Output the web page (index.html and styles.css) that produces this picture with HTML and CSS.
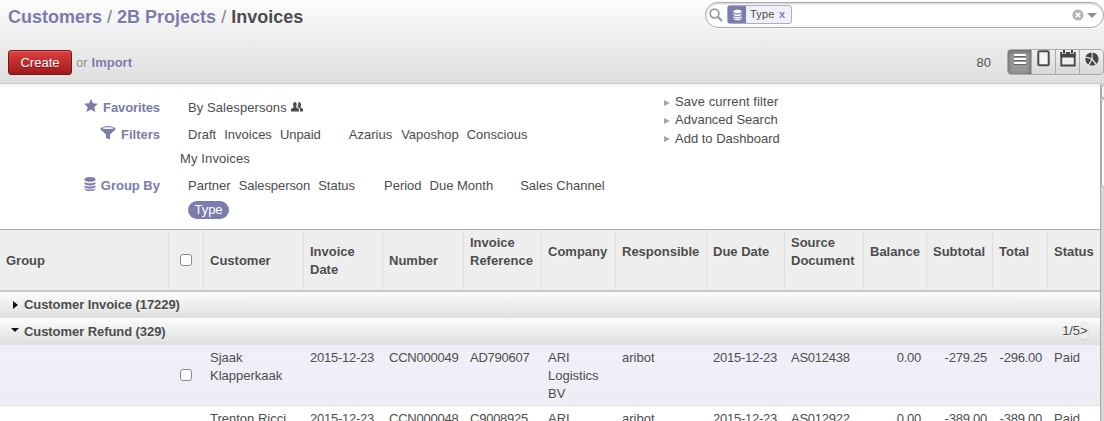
FILE: index.html
```html
<!DOCTYPE html>
<html lang="en">
<head>
<meta charset="utf-8">
<title>Invoices</title>
<link rel="stylesheet" href="styles.css">
</head>
<body>
<svg class="defs" width="0" height="0">
  <symbol id="db" viewBox="0 0 12 14"><path fill="currentColor" d="M.5 2.200C.5-.6 11.500-.6 11.500 2.200V3C11.500 5.400 .5 5.400 .5 3zM0.500 5C2 6.700 10 6.700 11.500 5V6.800C10 9.200 2 9.200 .5 6.800zM.5 8.300C2 10 10 10 11.500 8.300V10C10 12.200 2 12.200 .5 10zM.5 11.400C3 13 9 13 11.500 11.400V12.400C9 14.600 3 14.600 .5 12.400z"/></symbol>
</svg>
<header class="head">
  <div class="row top">
    <h1 class="crumbs"><a>Customers</a> <i>/</i> <a>2B Projects</a> <i>/</i> <b>Invoices</b></h1>
    <div class="search">
      <svg class="glass" viewBox="0 0 14 14"><circle cx="5.500" cy="5.500" r="4.400" fill="none" stroke="#9b9b9b" stroke-width="1.700"/><path d="M8.700 8.700L13 13" stroke="#9b9b9b" stroke-width="2.200"/></svg>
      <div class="facet"><span class="facet-icon"><svg width="9" height="12"><use href="#db"/></svg></span><span class="facet-text">Type</span><span class="x">x</span></div>
      <svg class="clear" viewBox="0 0 12 12"><circle cx="6" cy="6" r="5.600" fill="#b4b4b4"/><path d="M3.800 3.800L8.200 8.200M8.200 3.800L3.800 8.200" stroke="#fff" stroke-width="1.700"/></svg>
      <span class="down"></span>
    </div>
  </div>
  <div class="row actions">
    <button class="create">Create</button><span class="or">or</span><a class="import">Import</a>
    <span class="count">80</span>
    <div class="views">
      <span class="on"><svg width="14" height="12"><path d="M1 1.500h12M1 5.500h12M1 9.500h12" stroke="#666" stroke-width="1" transform="translate(0 1)"/><path d="M1 1h12M1 5h12M1 9h12" stroke="#fff" stroke-width="1.800"/></svg></span>
      <span><svg width="13" height="17"><rect x="1.300" y="1.300" width="10.400" height="14" rx="1" fill="#f4f4f4" stroke="#4c4c4c" stroke-width="2"/></svg></span>
      <span><svg width="16" height="17"><path d="M1.300 3h13.400v12.500H1.300z" fill="#eee" stroke="#444" stroke-width="1.800"/><path d="M.5 2.500h15V7.500H.5z" fill="#444"/><path d="M4 .5v3.500M12 .5v3.500" stroke="#eee" stroke-width="3.600"/><path d="M4 0v3.500M12 0v3.500" stroke="#444" stroke-width="2"/></svg></span>
      <span><svg width="14" height="17"><circle cx="7" cy="9" r="6.600" fill="#444"/><path d="M0 6.500L7 9L11.500 15M7 9L3.500 15.500M7 9V2" stroke="#eee" stroke-width="1.300" fill="none"/><path d="M0 2h6.300V6L0 6z" fill="#eee"/><path d="M.6 6.500C1.500 4.500 3 3 6.500 2.500V7.500z" fill="#444"/></svg></span>
    </div>
  </div>
</header>
<main class="main">
  <div class="content">
    <section class="drawer">
      <div class="filters">
        <div class="line fav"><span class="label"><svg width="14" height="13" viewBox="0 0 14 13"><path fill="currentColor" d="M7 0l2 4.200 5 .5-3.700 3.200L11.500 13 7 10.500 2.500 13l1.200-5.100L0 4.700l5-.5z"/></svg>Favorites</span><span class="sales">By Salespersons</span><svg class="people" width="12" height="10" viewBox="0 0 12 10"><path fill="#4c4c4c" d="M4 0c2 0 2.300 3.500.8 5L8 7v2.500H0V7l3-2C1.500 3.500 2 0 4 0zM7 .5c3-1.500 4 2.500 2.200 4.500L12 7v2.500H9V6.500L6.300 5C7.500 3.500 7.500 2 7 .5z"/></svg></div>
        <div class="line fil"><span class="label"><svg width="16" height="14" viewBox="0 0 16 14"><path fill="currentColor" d="M.5 2Q8-1.800 15.500 2V3.500L10 8.500V13.500L6 12V8.500L.5 3.500z"/><ellipse cx="8" cy="2.100" rx="5.500" ry=".9" fill="#fff"/></svg>Filters</span><span>Draft</span><span>Invoices</span><span class="unpaid">Unpaid</span><span class="set">Azarius</span><span class="vapo">Vaposhop</span><span>Conscious</span></div>
        <div class="line mine"><span class="my">My Invoices</span></div>
        <div class="line grp"><span class="label"><svg width="12" height="14"><use href="#db"/></svg>Group By</span><span>Partner</span><span class="person">Salesperson</span><span>Status</span><span class="set period">Period</span><span>Due Month</span><span class="set channel">Sales Channel</span></div>
        <div class="line typ"><span class="pill">Type</span></div>
      </div>
      <ul class="links"><li>Save current filter</li><li>Advanced Search</li><li>Add to Dashboard</li></ul>
    </section>
    <section class="table">
      <div class="cols th"><div>Group</div><div class="all"><input type="checkbox"></div><div>Customer</div><div>Invoice<br>Date</div><div>Number</div><div class="up">Invoice<br>Reference</div><div class="up">Company</div><div class="up">Responsible</div><div class="up">Due Date</div><div class="up">Source<br>Document</div><div class="up">Balance</div><div class="up">Subtotal</div><div class="up">Total</div><div class="up">Status</div></div>
      <div class="group g1"><i class="closed"></i>Customer Invoice (17229)</div>
      <div class="group g2"><i class="opened"></i>Customer Refund (329)<span class="pager">1/5<em>&gt;</em></span></div>
      <div class="cols tr odd"><div></div><div class="mid"><input type="checkbox"></div><div>Sjaak<br>Klapperkaak</div><div class="n">2015-12-23</div><div class="n">CCN000049</div><div class="n">AD790607</div><div>ARI<br>Logistics<br>BV</div><div>aribot</div><div class="n">2015-12-23</div><div class="n">AS012438</div><div class="n r">0.00</div><div class="n r">-279.25</div><div class="n r">-296.00</div><div>Paid</div></div>
      <div class="cols tr"><div></div><div class="mid"><input type="checkbox"></div><div>Trenton Ricci</div><div class="n">2015-12-23</div><div class="n">CCN000048</div><div class="n">C9008925</div><div>ARI<br>Logistics<br>BV</div><div>aribot</div><div class="n">2015-12-23</div><div class="n">AS012922</div><div class="n r">0.00</div><div class="n r">-389.00</div><div class="n r">-389.00</div><div>Paid</div></div>
    </section>
  </div>
  <div class="scroll"><div class="cap"></div><div class="thumb"></div></div>
</main>
</body>
</html>
```
FILE: styles.css
```css
* { box-sizing: border-box; }
body { margin: 0; width: 1104px; height: 421px; overflow: hidden; background: #fff; color: #4c4c4c; font: 13px/18px "Liberation Sans", Arial, sans-serif; text-shadow: 0 1px 1px rgba(255,255,255,.5); }
.defs { display: block; }
.head { height: 84px; background: linear-gradient(#fcfcfc, #dedede); border-bottom: 1px solid #cacaca; overflow: hidden; }
.row { display: flex; }
.top { height: 49px; padding-left: 8px; justify-content: space-between; }
.crumbs { margin: 6px 0 0; font-size: 18px; line-height: 22px; font-weight: bold; white-space: nowrap; }
.crumbs a, .import { color: #7c7bad; }
.crumbs i { font-style: normal; font-weight: normal; color: #808080; }
.search { display: flex; align-items: flex-start; width: 399px; height: 26px; margin-top: 2px; border: 1px solid #ababab; border-radius: 13px; background: #fff; box-shadow: inset 0 1px 2px rgba(0,0,0,.2), 0 1px 0 rgba(255,255,255,.6); }
.glass { width: 14px; height: 14px; margin: 5px 4px 0 3px; }
.facet { display: flex; width: 65px; height: 19px; margin-top: 2px; border: 1px solid #afafb6; border-radius: 3px; background: #f0f0fa; font-size: 11px; line-height: 17px; }
.facet-icon { width: 18px; background: #7c7bad; display: flex; align-items: center; justify-content: center; color: #fff; }
.facet-text { margin-left: 4px; width: 29px; letter-spacing: .2px; }
.x { color: #7c7bad; font-weight: bold; font-size: 11px; }
.clear { width: 12px; height: 12px; margin: 6px 3px 0 auto; }
.down { border: 5px solid transparent; border-top-color: #909090; border-bottom: 0; margin: 10px 6px 0 0; }
.actions { height: 34px; padding-left: 8px; }
.create { width: 64px; height: 25px; margin: 1px 0 0; padding: 0; border: 1px solid #73191a; border-radius: 3px; color: #fff; font: 13px "Liberation Sans", sans-serif; background: linear-gradient(#df3f3f, #a21a1a); box-shadow: inset 0 1px 1px rgba(255,255,255,.2); text-shadow: 0 1px 1px rgba(0,0,0,.3); }
.or, .import, .count { padding-top: 5px; }
.or { margin-left: 4px; color: #8c8c8c; }
.import { margin-left: 4px; font-weight: bold; }
.count { margin-left: auto; }
.views { display: flex; width: 97px; height: 26px; margin-left: 16px; border: 1px solid #ababab; border-radius: 4px; background: linear-gradient(#efefef, #d8d8d8); overflow: hidden; }
.views span { width: 24px; flex: none; border-right: 1px solid #ababab; display: flex; justify-content: center; }
.views .on { background: #999; box-shadow: inset 0 1px 5px rgba(0,0,0,.4); padding-top: 4px; }
.views span:last-child { border: 0; }
.main { display: flex; height: 337px; }
.content { width: 1100px; flex: none; overflow: hidden; background: #fff; }
.drawer { display: flex; height: 145px; background: linear-gradient(#f3f3f3, #fff 5px); }
.filters { width: 664px; padding-top: 15px; }
.line { display: flex; height: 18px; white-space: nowrap; }
.line > span + span { margin-left: 8px; }
.line > .label { width: 160px; margin-right: 20px; display: flex; justify-content: flex-end; font-weight: bold; color: #7c7bad; }
.label svg { margin: 0 5px 0 0; }
.line > .set { margin-left: 28px; }
.line .sales { letter-spacing: .08px; }
.line .unpaid { margin-left: 8px; letter-spacing: -.05px; }
.line .vapo { margin-left: 9px; }
.line .person { margin-left: 8px; letter-spacing: -.07px; }
.line > .period { margin-left: 29px; }
.line > .channel { margin-left: 27px; }
.my { letter-spacing: .12px; }
.people { margin: 3px 0 0 4px; }
.fil { margin-top: 9px; }
.fav .label svg { margin: 0 5px 0 0; }
.fav .label { letter-spacing: -.1px; }
.mine { margin-top: 6px; padding-left: 180px; }
.grp { margin-top: 9px; }
.typ { margin-top: 6px; padding-left: 188px; }
.pill { width: 41px; height: 18px; border-radius: 9px; background: #7c7bad; color: #fff; text-align: center; text-shadow: none; }
.links { margin: 9px 0 0; padding: 0; list-style: none; line-height: 18.3px; }
.links li { display: flex; align-items: center; }
.links li:first-child { letter-spacing: .08px; }
.links li::before { content: ""; border: 3.5px solid transparent; border-left: 6px solid #a5a5a9; border-right: 0; margin: 1px 5px 0 0; }
.cols { display: grid; grid-template-columns: 169px 35px 100px 79px 81px 78px 74px 91px 78px 79px 63px 66px 55px 52px; }
.cols > div { padding-left: 6px; white-space: nowrap; }
.th { height: 63px; border-top: 1px solid #afafb6; border-bottom: 2px solid #cacaca; background: #eee; font-weight: bold; }
.th > div { display: flex; align-items: center; border-right: 1px solid #dfdfdf; padding-top: 1px; }
.th > .all { padding: 0 0 1px 6px; }
.th > .up { padding-bottom: 17px; }
.th > div:last-child { border: 0; }
input { appearance: none; width: 12px; height: 12px; margin: 0 0 0 5px; border: 1px solid #8d8982; border-radius: 3px; background: #fff; }
.group { display: flex; align-items: center; background: linear-gradient(#fcfcfc, #dedede); font-weight: bold; letter-spacing: -.07px; }
.g1 { height: 26px; }
.g2 { height: 27px; }
.group i { width: 8px; margin: 0 4px 0 12px; }
.closed::before, .opened::before { content: ""; display: block; width: 0; border: 4px solid transparent; }
.closed::before { border-left: 5px solid #111; border-right: 0; margin-left: 1px; }
.opened::before { border-top: 4px solid #111; border-bottom: 0; margin: -4px 0 0 -1px; }
.pager { margin: -1px 12px 0 auto; font-weight: normal; display: flex; }
.pager em { font-style: normal; width: 8px; height: 17px; border-radius: 3px; background: #eee; box-shadow: 0 1px 2px rgba(0,0,0,.12); }
.tr { height: 61px; padding-top: 4px; border-bottom: 1px solid #dfdfdf; }
.odd { background: linear-gradient(#f0f0fa, #ededf6); }
.n { letter-spacing: -.24px; }
.cols > .r { text-align: right; padding: 0 6px 0 0; }
.mid { padding-top: 19px; }
.scroll { width: 4px; border-left: 1px solid #a9a6a2; background: #d9d6d2; overflow: hidden; }
.cap { width: 14px; height: 14px; border: 1px solid #aaa; border-radius: 5px 0 0 0; background: #f4f3f2; }
.thumb { width: 14px; height: 90px; border: 1px solid #aaa; border-radius: 4px; background: #faf9f9; }
```
